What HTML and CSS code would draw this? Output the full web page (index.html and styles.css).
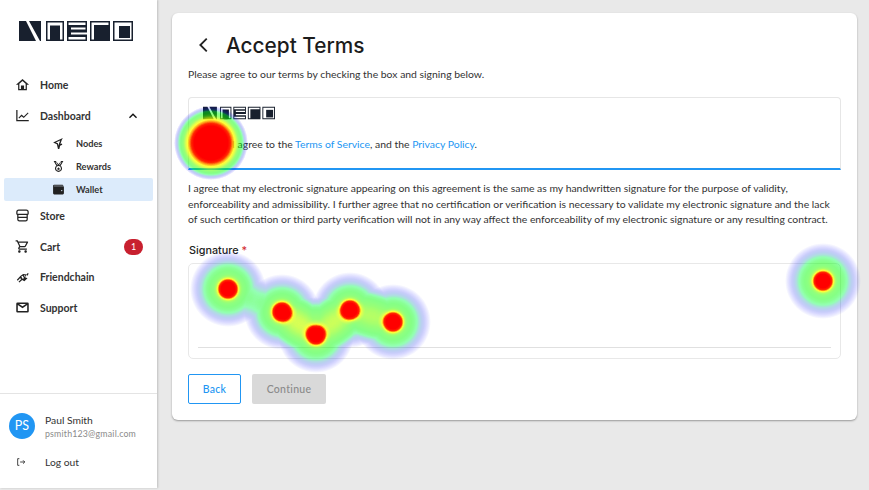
FILE: index.html
```
<!DOCTYPE html>
<html lang="en">
<head>
<meta charset="utf-8">
<title>Accept Terms</title>
<link rel="stylesheet" href="styles.css">
</head>
<body>
<svg class="defs" width="0" height="0" aria-hidden="true">
  <symbol id="nerd-logo" viewBox="0 0 114 20">
    <path class="ink" d="M0 0h7l10 20H0zM10 0h12v20h-1z"/>
    <path class="ink" fill-rule="evenodd" d="M27 0h18v20H27zM28.500 1.500v17h2.500V4.500h10v14h2.500v-17z"/>
    <path class="ink" d="M33 6.500h6V20h-6z"/>
    <path class="ink" fill-rule="evenodd" d="M48 0h20v20H48zM49.500 1.500V4H66.500V1.500zM52 6.500v2h14.500v-2zM52 11.500v2h16v-2zM49.500 16v2.500h17V16z"/>
    <path class="ink" fill-rule="evenodd" d="M71 0h20v20H71zM72.500 1.500v17H75V4h14.500V1.500z"/>
    <path class="ink" fill-rule="evenodd" d="M94 0h20v20H94zM95.500 1.500v17h17v-17z"/>
    <path class="ink" d="M100 5h11v12h-11z"/>
  </symbol>
</svg>

<aside class="sidebar">
  <svg class="logo"><use href="#nerd-logo"/></svg>
  <nav class="nav">
    <a class="nav-row">
      <svg class="icon" viewBox="0 0 24 24"><path d="M12 3 1.500 12.500H5V21h14v-8.500h3.500zM17 19h-2.500v-5.500h-5V19H7v-8.300l5-4.500 5 4.500z"/></svg>
      <span>Home</span>
    </a>
    <a class="nav-row open">
      <svg class="icon" viewBox="0 0 24 24"><path d="M2 3h2v16h18v2H2z"/><path d="m5.500 15.500 5-5 3.500 3 6.500-6.500 1.200 1.200L14 16l-3.500-3-3.800 3.700z"/></svg>
      <span>Dashboard</span>
      <svg class="chevron" viewBox="0 0 24 24"><path d="M7.410 15.410 12 10.830l4.590 4.580L18 14l-6-6-6 6z"/></svg>
    </a>
    <a class="sub-row">
      <svg class="icon-sm" viewBox="0 0 24 24"><path d="M20 2 2 10l7 3.500L11 22h2.500l1.500-6 4-1.500-1-2.500-2.500 1L18 5.500zM7 10l8-3.500-2 5.500-1 4-1-4.500z"/></svg>
      <span>Nodes</span>
    </a>
    <a class="sub-row">
      <svg class="icon-sm" viewBox="0 0 24 24"><path d="M3 2h4l5 6 5-6h4l-5 8.500a6.500 6.500 0 1 1-8 0zM6.500 4l3.500 5.500.8-.4L8 4zm11 0H16l-2.800 5.100.8.4zM12 11a4.500 4.500 0 1 0 0 9 4.500 4.500 0 0 0 0-9zm0 2 1 2 2 .3-1.500 1.400.4 2.100-1.900-1-1.900 1 .4-2.100L9 15.300l2-.3z"/></svg>
      <span>Rewards</span>
    </a>
    <a class="sub-row active">
      <svg class="icon-sm" viewBox="0 0 24 24"><path d="M4 3h15a2 2 0 0 1 2 2H3.500V6H21a1 1 0 0 1 1 1v12a2 2 0 0 1-2 2H4a2 2 0 0 1-2-2V5a2 2 0 0 1 2-2z"/><circle class="hole" cx="18" cy="14" r="1.300"/></svg>
      <span>Wallet</span>
    </a>
    <a class="nav-row">
      <svg class="icon" viewBox="0 0 24 24"><path fill-rule="evenodd" d="M6 2.500h12a4 4 0 0 1 4 4V9a2 2 0 0 1-1.500 2v7a3.500 3.500 0 0 1-3.500 3.500H7A3.500 3.500 0 0 1 3.500 18v-7A2 2 0 0 1 2 9V6.500a4 4 0 0 1 4-4zM6 4.500a2 2 0 0 0-2 2V9h16V6.500a2 2 0 0 0-2-2zM5.500 11v3h13v-3zm0 5v2A1.500 1.500 0 0 0 7 19.500h10a1.500 1.500 0 0 0 1.500-1.500v-2z"/></svg>
      <span>Store</span>
    </a>
    <a class="nav-row">
      <svg class="icon" viewBox="0 0 24 24"><path d="M15.550 13c.75 0 1.410-.41 1.750-1.030l3.580-6.490A.996.996 0 0 0 20.010 4H5.210l-.94-2H1v2h2l3.600 7.590-1.350 2.440C4.520 15.370 5.480 17 7 17h12v-2H7l1.100-2h7.450zM6.160 6h12.150l-2.760 5H8.530L6.160 6zM7 18c-1.100 0-1.990.9-1.990 2S5.900 22 7 22s2-.9 2-2-.9-2-2-2zm10 0c-1.100 0-1.990.9-1.990 2s.89 2 1.990 2 2-.9 2-2-.9-2-2-2z"/></svg>
      <span>Cart</span>
      <span class="badge">1</span>
    </a>
    <a class="nav-row">
      <svg class="icon" viewBox="0 0 24 24"><path d="M22 5.500 20 9l-2-1-1.800 3.400L20 13l-5 5-3.500-2-4.500 4-1.400-1.300 4.600-4.200-2.200-1.500L4.300 17 3 15.700l5.500-6.200L13 6.200l6 .8.500-1.800zM10 10.500l2.500 4 1.800-1.800-2-3.500zm4-2.300L15.700 11l.8-1.800-1.500-1z"/></svg>
      <span>Friendchain</span>
    </a>
    <a class="nav-row">
      <svg class="icon" viewBox="0 0 24 24"><path fill-rule="evenodd" d="M4 4h16a2 2 0 0 1 2 2v12a2 2 0 0 1-2 2H4a2 2 0 0 1-2-2V6a2 2 0 0 1 2-2zm.500 4v9.500h15V8L12 13zM6.500 6.500 12 10l5.500-3.500z"/></svg>
      <span>Support</span>
    </a>
  </nav>
  <div class="account">
    <div class="user">
      <div class="avatar">PS</div>
      <div class="user-text">
        <div class="user-name">Paul Smith</div>
        <div class="user-mail">psmith123@gmail.com</div>
      </div>
    </div>
    <a class="logout">
      <svg class="icon-out" viewBox="0 0 24 24"><path class="line" d="M8 4H4v16h4M10 12h11M17 8l4 4-4 4"/></svg>
      <span>Log out</span>
    </a>
  </div>
</aside>

<main class="main">
  <section class="card">
    <header class="title-row">
      <svg class="back" viewBox="0 0 24 24"><path class="line" d="M15 5l-7 7 7 7"/></svg>
      <h1>Accept Terms</h1>
    </header>
    <p class="intro">Please agree to our terms by checking the box and signing below.</p>
    <div class="terms">
      <svg class="logo-small"><use href="#nerd-logo"/></svg>
      <p class="agree">I agree to the <a>Terms of Service</a>, and the <a>Privacy Policy</a>.</p>
    </div>
    <p class="legal">I agree that my electronic signature appearing on this agreement is the same as my handwritten signature for the purpose of validity, enforceability and admissibility. I further agree that no certification or verification is necessary to validate my electronic signature and the lack of such certification or third party verification will not in any way affect the enforceability of my electronic signature or any resulting contract.</p>
    <div class="sig-label">Signature <span class="req">*</span></div>
    <div class="sig-box"><div class="sig-line"></div></div>
    <div class="actions">
      <button class="btn btn-back">Back</button>
      <button class="btn btn-continue">Continue</button>
    </div>
  </section>
</main>

<svg class="heat" width="869" height="490" viewBox="0 0 869 490" aria-hidden="true">
  <defs>
    <radialGradient id="spot">
      <stop offset="0" stop-color="#000" stop-opacity="1"/>
      <stop offset=".24" stop-color="#000" stop-opacity=".74"/>
      <stop offset=".32" stop-color="#000" stop-opacity=".55"/>
      <stop offset=".4" stop-color="#000" stop-opacity=".45"/>
      <stop offset=".53" stop-color="#000" stop-opacity=".37"/>
      <stop offset=".66" stop-color="#000" stop-opacity=".28"/>
      <stop offset="1" stop-color="#000" stop-opacity="0"/>
    </radialGradient>
    <filter id="palette" filterUnits="userSpaceOnUse" x="0" y="0" width="869" height="490" color-interpolation-filters="sRGB">
      <feColorMatrix type="matrix" values="0 0 0 1 0  0 0 0 1 0  0 0 0 1 0  0 0 0 1 0"/>
      <feComponentTransfer>
        <feFuncR type="table" tableValues="0 0 0 0 0 0 0 0 0 .1 .25 .5 .8 1 1 1 1 1 1 1 1"/>
        <feFuncG type="table" tableValues="0 0 0 .1 .3 .6 1 1 1 1 1 1 1 1 .6 .15 0 0 0 0 0"/>
        <feFuncB type="table" tableValues="1 1 1 .9 .8 .6 .3 .1 0 0 0 0 0 0 0 0 0 0 0 0 0"/>
        <feFuncA type="table" tableValues="0 .08 .15 .22 .27 .32 .42 .46 .48 .5 .54 .6 .68 .78 .9 1 1 1 1 1 1"/>
      </feComponentTransfer>
    </filter>
  </defs>
  <g filter="url(#palette)" fill="url(#spot)">
    <circle cx="211" cy="143" r="37"/><circle cx="211" cy="143" r="37"/><circle cx="211" cy="143" r="37"/>
    <circle cx="228" cy="289" r="38"/>
    <circle cx="282" cy="312" r="38"/>
    <circle cx="316" cy="335" r="38"/>
    <circle cx="350" cy="310" r="38"/>
    <circle cx="393" cy="322" r="38"/>
    <circle cx="823" cy="281" r="38"/>
  </g>
</svg>
</body>
</html>
```
FILE: styles.css
```
* { box-sizing: border-box; }

html, body {
  margin: 0;
  height: 490px;
  overflow: hidden;
}

body {
  display: flex;
  align-items: flex-start;
  background: #e9e9e9;
  font-family: "Lato", "Liberation Sans", sans-serif;
  color: #222;
  position: relative;
}

.defs { position: absolute; }
.ink { fill: #18202e; }
.line { fill: none; stroke: #222; stroke-width: 2; }
.hole { fill: #dcebfb; }

.sidebar {
  width: 157px;
  height: 488px;
  flex: none;
  display: flex;
  flex-direction: column;
  background: #fff;
  box-shadow: 1px 0 2px rgba(0, 0, 0, .18);
}

.logo {
  width: 114px;
  height: 20px;
  margin: 21px 0 0 19px;
  flex: none;
}

.nav {
  display: flex;
  flex-direction: column;
  margin-top: 28.600px;
  flex: 1;
}

.nav-row, .sub-row {
  display: flex;
  align-items: center;
}

.nav-row {
  height: 30.670px;
  padding: 0 14px 0 15px;
  gap: 10px;
  font-size: 10.500px;
  font-weight: 700;
  color: #333;
}

.nav-row.open { margin-bottom: .700px; }

.sub-row {
  height: 23px;
  margin: 0 4px;
  padding-left: 47.500px;
  gap: 11.500px;
  font-size: 9.200px;
  font-weight: 700;
  color: #333;
  border-radius: 2px;
}

.sub-row.active { background: #dcebfb; }

.icon { width: 15px; height: 15px; fill: #222; flex: none; }
.icon-sm { width: 13px; height: 13px; fill: #222; flex: none; }
.chevron { width: 16px; height: 16px; margin-left: auto; margin-right: 2px; fill: #111; }

.badge {
  margin-left: auto;
  width: 19px;
  height: 16px;
  border-radius: 8px;
  background: #c8202f;
  color: #fff;
  font-size: 9px;
  font-weight: 400;
  display: flex;
  align-items: center;
  justify-content: center;
}

.account {
  border-top: 1px solid #e4e4e4;
  height: 95px;
  flex: none;
  padding: 16px 0 0 9px;
}

.user { display: flex; align-items: center; gap: 10px; }

.avatar {
  width: 26px;
  height: 26px;
  border-radius: 50%;
  background: #2196f3;
  color: #fff;
  font-size: 12.500px;
  display: flex;
  align-items: center;
  justify-content: center;
  flex: none;
}

.user-text { margin-top: 3px; }
.user-name { font-size: 10.300px; color: #333; line-height: 14px; }
.user-mail { font-size: 8.800px; color: #8a8a8a; line-height: 14px; letter-spacing: .18px; }

.logout {
  display: flex;
  align-items: center;
  gap: 19px;
  margin: 15px 0 0 7px;
  font-size: 10.300px;
  color: #333;
}

.icon-out { width: 10px; height: 10px; flex: none; }

.main {
  flex: 1;
  padding: 13px 12px 0 15px;
}

.card {
  height: 407px;
  background: #fff;
  border-radius: 6px;
  box-shadow: 0 1px 2px rgba(0, 0, 0, .35);
  padding: 16px 16px 0;
}

.title-row {
  display: flex;
  align-items: center;
  height: 32px;
  padding-left: 4.500px;
  gap: 11.500px;
}

.back { width: 22px; height: 22px; flex: none; }

h1 {
  margin: 0;
  font-family: "Inter", sans-serif;
  font-size: 20.800px;
  font-weight: 500;
  color: #1c1c1c;
}

.intro {
  margin: 5px 0 0;
  font-size: 10.420px;
  line-height: 16px;
  color: #333;
}

.terms {
  margin-top: 15px;
  height: 73px;
  border: 1px solid #e6e6e6;
  border-bottom: 2px solid #2196f3;
  border-radius: 4px 4px 0 0;
  padding: 8px 14px 0;
}

.logo-small { width: 72px; height: 14px; display: block; }

.agree {
  margin: 16px 0 0 29px;
  font-size: 10.420px;
  line-height: 16px;
  color: #333;
}

.agree a { color: #2196f3; }

.legal {
  margin: 11px 0 0;
  font-size: 10.420px;
  line-height: 15.500px;
  color: #333;
}

.sig-label {
  margin: 16px 0 0 1px;
  font-family: "Inter", sans-serif;
  font-size: 10.800px;
  font-weight: 500;
  line-height: 14px;
  color: #222;
}

.req { color: #d32f2f; }

.sig-box {
  margin-top: 5px;
  height: 96px;
  border: 1px solid #e8e8e8;
  border-radius: 5px;
  padding: 83px 9px 0;
}

.sig-line { height: 1px; background: #e0e0e0; }

.actions { display: flex; gap: 11px; margin-top: 15px; }

.btn {
  height: 30px;
  border-radius: 2px;
  font-family: "Lato", sans-serif;
  font-size: 10.500px;
  font-weight: 500;
  letter-spacing: .3px;
  padding: 0;
}

.btn-back { width: 53px; background: #fff; border: 1px solid #2196f3; color: #2196f3; }
.btn-continue { width: 74px; background: #d9d9d9; border: 0; color: #8a8a8a; }

.heat {
  position: absolute;
  left: 0;
  top: 0;
  pointer-events: none;
}
```
